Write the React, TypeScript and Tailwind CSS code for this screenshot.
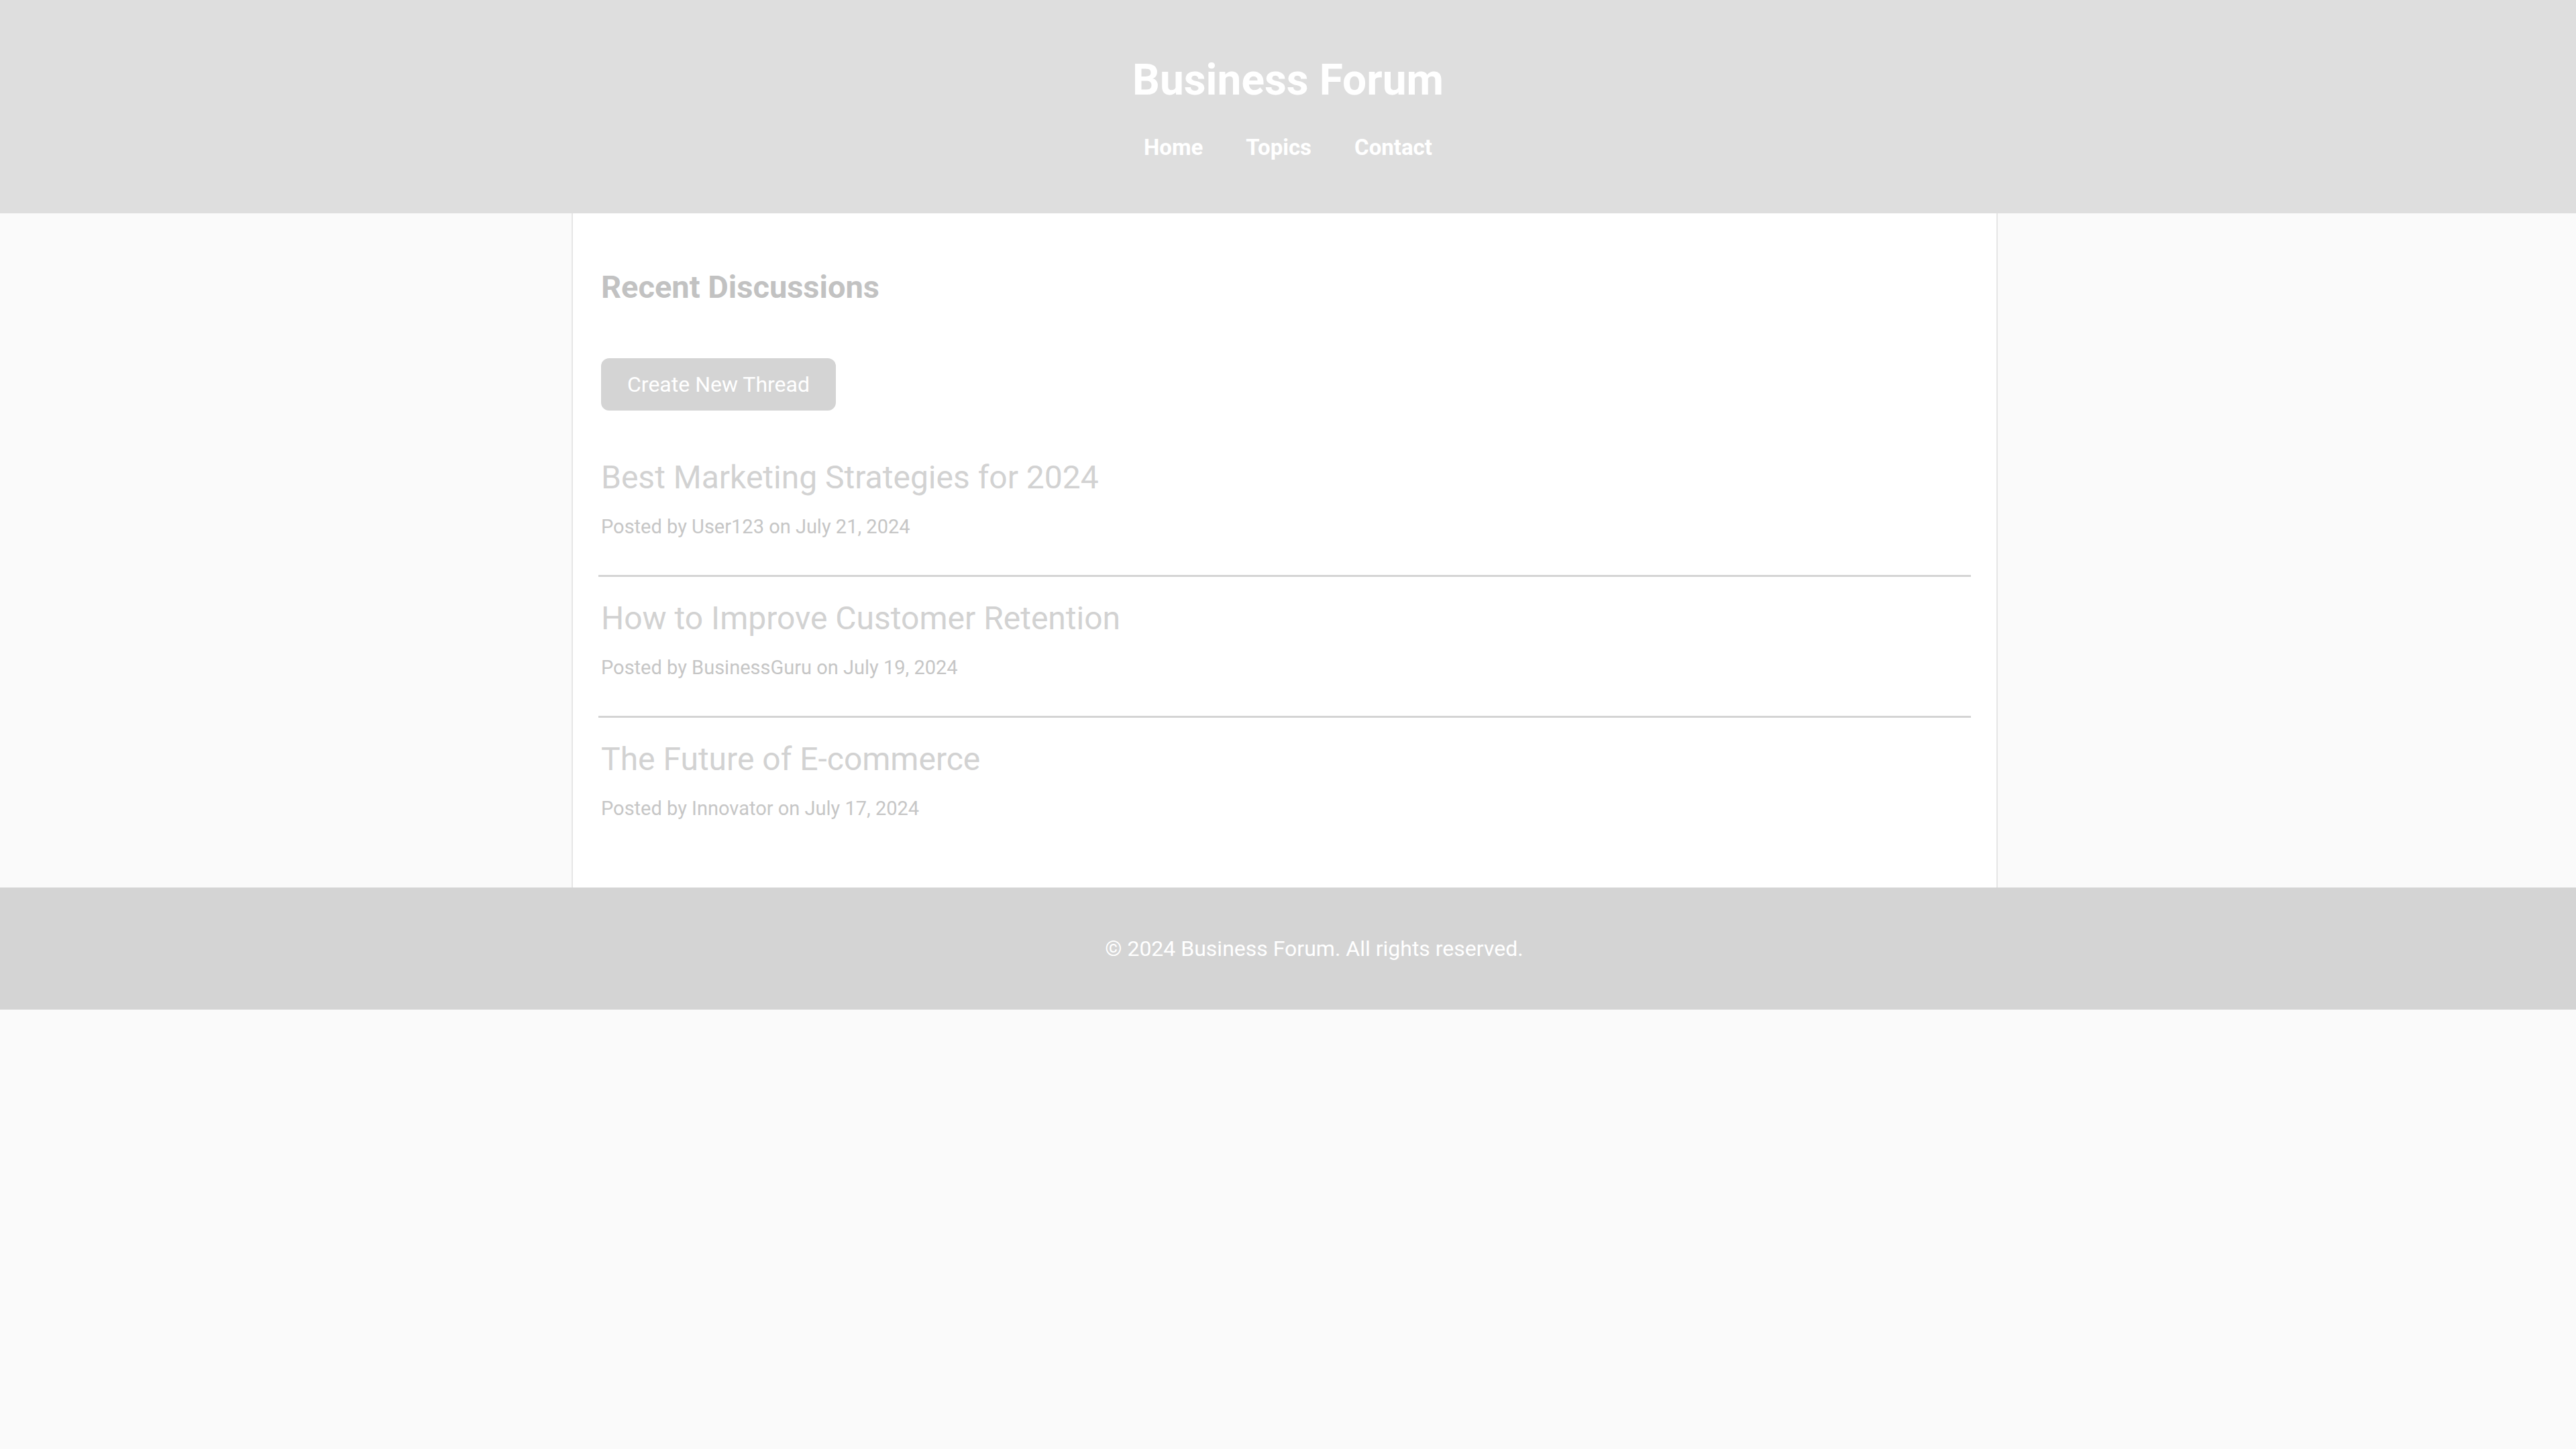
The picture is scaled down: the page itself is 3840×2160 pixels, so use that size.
import React from "react";

const threads = [
  { title: "Best Marketing Strategies for 2024", meta: "Posted by User123 on July 21, 2024" },
  { title: "How to Improve Customer Retention", meta: "Posted by BusinessGuru on July 19, 2024" },
  { title: "The Future of E-commerce", meta: "Posted by Innovator on July 17, 2024" },
];

export default function App() {
  return (
    <div
      className="min-h-screen w-full bg-[#fafafa] flex flex-col"
      style={{ fontFamily: "Roboto, 'Liberation Sans', Arial, sans-serif" }}
    >
      <header className="w-full h-[318px] bg-[#dedede] flex flex-col items-center pt-[88px]">
        <h1 className="text-[64px] leading-[64px] font-bold text-white">Business Forum</h1>
        <nav className="mt-[48px] flex gap-[64px] text-[33px] leading-[40px] font-bold text-white">
          <a>Home</a>
          <a>Topics</a>
          <a>Contact</a>
        </nav>
      </header>

      <div className="w-full flex justify-center pr-[10px]">
        <main className="w-[2126px] bg-white border-x-[2px] border-[#e6e6e6] px-[42px] pt-[82px] pb-[100px]">
          <h2 className="text-[47px] leading-[56px] font-bold text-[#c2c2c2]">Recent Discussions</h2>
          <button className="mt-[78px] h-[78px] px-[39px] rounded-[12px] bg-[#d4d4d4] text-white text-[32px]">
            Create New Thread
          </button>
          <div className="mt-[72px] flex flex-col">
            {threads.map((t, i) => (
              <div key={i}>
                <h3 className="text-[48px] leading-[56px] text-[#d2d2d2]">{t.title}</h3>
                <p className="mt-[27px] text-[29px] leading-[36px] text-[#c6c6c6]">{t.meta}</p>
                {i < threads.length - 1 && (
                  <div className="-mx-[4px] mt-[54px] mb-[34px] h-[3px] bg-[#d4d4d4]" />
                )}
              </div>
            ))}
          </div>
        </main>
      </div>

      <footer className="w-full h-[182px] bg-[#d4d4d4] flex items-center justify-center pl-[78px]">
        <p className="text-[32px] text-white">© 2024 Business Forum. All rights reserved.</p>
      </footer>
    </div>
  );
}
